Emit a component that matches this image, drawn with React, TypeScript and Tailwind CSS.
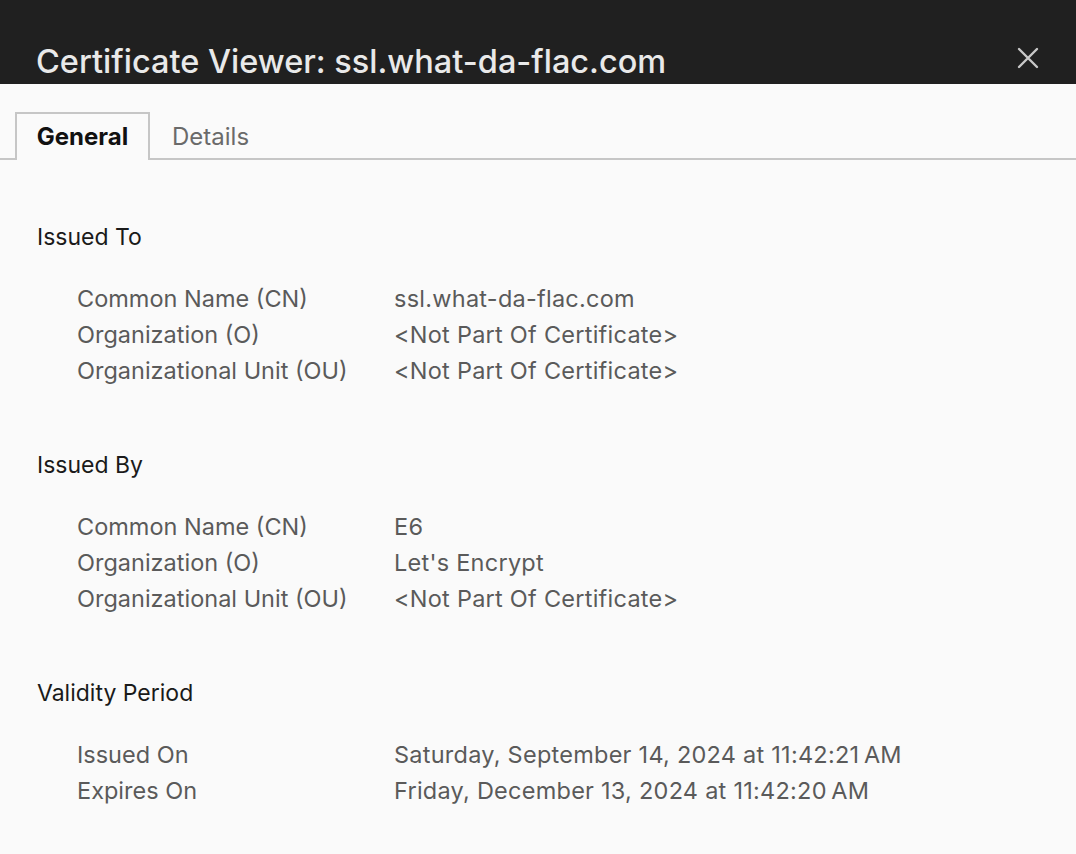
import React from "react";

const Row = ({ label, value }: { label: string; value: string }) => (
  <div className="flex h-[36px] items-center">
    <div className="w-[317px] shrink-0">{label}</div>
    <div className="tracking-[0.25px]">{value}</div>
  </div>
);

const Section = ({ title, rows }: { title: string; rows: [string, string][] }) => (
  <div>
    <div className="h-[36px] flex items-center text-[#1a1a1a] text-[23px]">{title}</div>
    <div className="mt-[26px] pl-[40px] text-[#5a5a5a] text-[23.5px]">
      {rows.map(([l, v]) => (
        <Row key={l} label={l} value={v} />
      ))}
    </div>
  </div>
);

export default function App() {
  return (
    <div className="w-[1076px] h-[854px] bg-[#fafafa] overflow-hidden" style={{ fontFamily: "Inter, 'Noto Sans', sans-serif" }}>
      <div className="h-[84px] bg-[#202020] flex items-end justify-between pl-[36px] pr-[36px]">
        <div className="text-[#e9e9e9] text-[32.5px] font-medium leading-[44px]">Certificate Viewer: ssl.what-da-flac.com</div>
        <svg width="24" height="24" viewBox="0 0 24 24" className="mb-[14px]">
          <path d="M3 3 L21 21 M21 3 L3 21" stroke="#c8c8c8" strokeWidth="2.4" strokeLinecap="round" />
        </svg>
      </div>
      <div className="mt-[28px] flex border-b-2 border-[#c6c6c6] h-[48px]">
        <div className="ml-[15px] w-[135px] border-2 border-b-0 border-[#c6c6c6] bg-[#fafafa] -mb-[2px] flex items-center justify-center text-[24px] font-bold text-[#111]">
          General
        </div>
        <div className="ml-[22px] pt-[4px] flex items-center text-[24px] text-[#6a6a6a]">Details</div>
      </div>
      <div className="pl-[37px] pt-[59px] flex flex-col gap-[58px]">
        <Section
          title="Issued To"
          rows={[
            ["Common Name (CN)", "ssl.what-da-flac.com"],
            ["Organization (O)", "<Not Part Of Certificate>"],
            ["Organizational Unit (OU)", "<Not Part Of Certificate>"],
          ]}
        />
        <Section
          title="Issued By"
          rows={[
            ["Common Name (CN)", "E6"],
            ["Organization (O)", "Let's Encrypt"],
            ["Organizational Unit (OU)", "<Not Part Of Certificate>"],
          ]}
        />
        <Section
          title="Validity Period"
          rows={[
            ["Issued On", "Saturday, September 14, 2024 at 11:42:21\u202FAM"],
            ["Expires On", "Friday, December 13, 2024 at 11:42:20\u202FAM"],
          ]}
        />
      </div>
    </div>
  );
}
